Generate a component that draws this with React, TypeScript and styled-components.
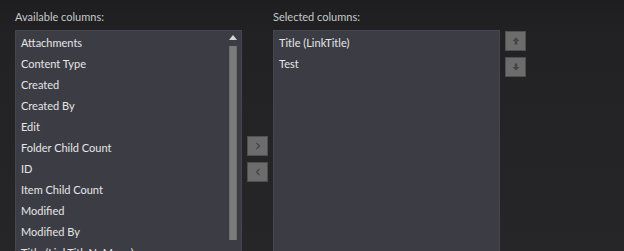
import React from 'react';
import styled, { createGlobalStyle } from 'styled-components';

const GlobalStyle = createGlobalStyle`
    html, body {
        margin: 0;
        padding: 0;
        height: 100%;
        overflow: hidden;
        background: linear-gradient(180deg, #1e1e20 0px, #222224 40px, #262628 251px);
        font-family: Lato, "Open Sans", "Liberation Sans", sans-serif;
    }
`;

const Page = styled.div`
    display: flex;
    padding-left: 15px;
`;

const Column = styled.section`
    display: flex;
    flex-direction: column;
    width: 227px;
`;

const Label = styled.div`
    height: 30px;
    padding-top: 10px;
    box-sizing: border-box;
    font-size: 11px;
    line-height: 14px;
    color: #c9c9cb;
`;

const ListBox = styled.div`
    position: relative;
    display: flex;
    height: 240px;
    background: #3c3d44;
    border: 1px solid #45464d;
    box-sizing: border-box;
    overflow: hidden;
`;

const Items = styled.ul`
    flex: 1;
    margin: 0;
    padding: 1px 0 0 5px;
    list-style: none;
`;

const Item = styled.li`
    height: 21px;
    line-height: 21px;
    font-size: 11px;
    color: #e6e6e8;
    white-space: nowrap;
`;

const Scrollbar = styled.div`
    display: flex;
    flex-direction: column;
    align-items: center;
    width: 10px;
    margin: 4px 3px 0 0;
`;

const ScrollArrow = styled.div`
    width: 0;
    height: 0;
    border-left: 4px solid transparent;
    border-right: 4px solid transparent;
    border-bottom: 5px solid #d6d6d8;
    margin-bottom: 6px;
`;

const Thumb = styled.div`
    width: 8px;
    height: 194px;
    background: #7b7b7b;
    border-left: 1px solid #6c6c6c;
    border-right: 1px solid #6c6c6c;
    box-sizing: border-box;
`;

const Gutter = styled.div`
    display: flex;
    flex-direction: column;
    gap: 6px;
    width: 31px;
    padding: 136px 0 0 5px;
    box-sizing: border-box;
`;

const SideButtons = styled.div`
    display: flex;
    flex-direction: column;
    gap: 6px;
    padding: 31px 0 0 5px;
`;

const ArrowButton = styled.button`
    display: flex;
    align-items: center;
    justify-content: center;
    width: 21px;
    height: 20px;
    padding: 0;
    background: #6c6c6c;
    border: 1px solid #505050;
    color: #454545;
    cursor: pointer;
`;

const Chevron = ({ dir }: { dir: 'left' | 'right' }) => (
    <svg width="8" height="10" viewBox="0 0 8 10">
        <path
            d={dir === 'right' ? 'M2.5 2 L5.5 5 L2.5 8' : 'M5.5 2 L2.5 5 L5.5 8'}
            fill="none"
            stroke="currentColor"
            strokeWidth="1.3"
        />
    </svg>
);

const Arrow = ({ dir }: { dir: 'up' | 'down' }) => (
    <svg width="10" height="10" viewBox="0 0 10 10">
        <g transform={dir === 'down' ? 'rotate(180 5 5)' : undefined}>
            <path d="M5 1.5 L8.5 5 L6.3 5 L6.3 8.5 L3.7 8.5 L3.7 5 L1.5 5 Z" fill="currentColor" />
        </g>
    </svg>
);

const available = [
    'Attachments',
    'Content Type',
    'Created',
    'Created By',
    'Edit',
    'Folder Child Count',
    'ID',
    'Item Child Count',
    'Modified',
    'Modified By',
    'Title (LinkTitleNoMenu)',
];

const selected = ['Title (LinkTitle)', 'Test'];

const App = () => {
    return (
        <>
            <GlobalStyle />
            <Page>
                <Column>
                    <Label>Available columns:</Label>
                    <ListBox>
                        <Items>
                            {available.map((name) => (
                                <Item key={name}>{name}</Item>
                            ))}
                        </Items>
                        <Scrollbar>
                            <ScrollArrow />
                            <Thumb />
                        </Scrollbar>
                    </ListBox>
                </Column>
                <Gutter>
                    <ArrowButton title="Add">
                        <Chevron dir="right" />
                    </ArrowButton>
                    <ArrowButton title="Remove">
                        <Chevron dir="left" />
                    </ArrowButton>
                </Gutter>
                <Column>
                    <Label>Selected columns:</Label>
                    <ListBox>
                        <Items>
                            {selected.map((name) => (
                                <Item key={name}>{name}</Item>
                            ))}
                        </Items>
                    </ListBox>
                </Column>
                <SideButtons>
                    <ArrowButton title="Move up">
                        <Arrow dir="up" />
                    </ArrowButton>
                    <ArrowButton title="Move down">
                        <Arrow dir="down" />
                    </ArrowButton>
                </SideButtons>
            </Page>
        </>
    );
};

export default App;
